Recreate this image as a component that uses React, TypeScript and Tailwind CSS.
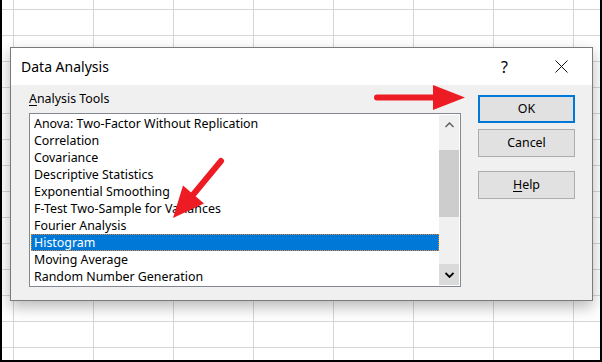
import React from "react";

const items = [
  "Anova: Two-Factor Without Replication",
  "Correlation",
  "Covariance",
  "Descriptive Statistics",
  "Exponential Smoothing",
  "F-Test Two-Sample for Variances",
  "Fourier Analysis",
  "Histogram",
  "Moving Average",
  "Random Number Generation",
];

export default function App() {
  return (
    <div
      className="relative w-[602px] h-[362px] overflow-hidden bg-black pl-[2px] pr-[2px] pb-[2px]"
      style={{ fontFamily: '"Noto Sans", "Open Sans", sans-serif' }}
    >
      <div className="w-full h-full bg-white bg-[image:linear-gradient(to_right,#d6d6d6_1px,transparent_1px),linear-gradient(to_bottom,#d6d6d6_1px,transparent_1px)] bg-[size:80px_26px] bg-[position:11px_9px]" />

      {/* Dialog */}
      <div className="absolute left-[10px] top-[47px] w-[583px] h-[254px] border border-[#7a7a7a] bg-[#f0f0f0] flex flex-col shadow-[0_6px_14px_rgba(0,0,0,0.28)]">
        <div className="h-[37px] bg-white flex items-center justify-between pl-[10px] pr-[2px] shrink-0">
          <span className="text-[14px] text-black leading-none">Data Analysis</span>
          <div className="flex items-center">
            <div className="w-[57px] flex justify-center text-[16px] text-black leading-none">?</div>
            <div className="w-[57px] flex justify-center">
              <svg width="13" height="13" viewBox="0 0 13 13">
                <path d="M0.5 0.5 L12.5 12.5 M12.5 0.5 L0.5 12.5" stroke="#111" strokeWidth="1" />
              </svg>
            </div>
          </div>
        </div>

        <div className="flex flex-1 pl-[18px] pr-[17px]">
          <div className="flex flex-col pt-[5px] w-[432px]">
            <div className="h-[18px] leading-[18px] text-[12.4px] text-black">
              <span className="underline underline-offset-2">A</span>nalysis Tools
            </div>
            <div className="mt-[5px] h-[174px] border border-[#828790] bg-white p-[1px] flex">
              <div className="flex-1 flex flex-col">
                {items.map((it) => {
                  const sel = it === "Histogram";
                  return (
                    <div
                      key={it}
                      className={
                        sel
                          ? "h-[17px] leading-[16px] pl-[2px] text-[12.4px] text-white bg-[#0078d7] border border-dotted border-[#e8842a] whitespace-nowrap"
                          : "h-[17px] leading-[18px] pl-[3px] text-[12.4px] text-black whitespace-nowrap"
                      }
                    >
                      {it}
                    </div>
                  );
                })}
              </div>
              <div className="w-[20px] flex flex-col bg-[#f0f0f0]">
                <div className="h-[20px] flex items-center justify-center">
                  <svg width="9" height="6" viewBox="0 0 9 6">
                    <path d="M0.5 5 L4.5 1 L8.5 5" stroke="#606060" strokeWidth="1.5" fill="none" />
                  </svg>
                </div>
                <div className="h-[15px]" />
                <div className="h-[67px] bg-[#cdcdcd]" />
                <div className="flex-1" />
                <div className="h-[21px] bg-[#dadada] flex items-center justify-center">
                  <svg width="9" height="6" viewBox="0 0 9 6">
                    <path d="M0.5 1 L4.5 5 L8.5 1" stroke="#000" strokeWidth="1.8" fill="none" />
                  </svg>
                </div>
              </div>
            </div>
          </div>

          <div className="ml-auto flex flex-col pt-[10px] w-[97px]">
            <div className="h-[28px] border-2 border-[#0078d7] bg-[#e1e1e1] flex items-center justify-center text-[12.4px] text-black">
              OK
            </div>
            <div className="mt-[6px] h-[28px] border border-[#adadad] bg-[#e1e1e1] flex items-center justify-center text-[12.4px] text-black">
              Cancel
            </div>
            <div className="mt-[14px] h-[28px] border border-[#adadad] bg-[#e1e1e1] flex items-center justify-center text-[12.4px] text-black">
              <span>
                <span className="underline underline-offset-2">H</span>elp
              </span>
            </div>
          </div>
        </div>
      </div>

      {/* Red arrows */}
      <svg className="absolute left-0 top-0 pointer-events-none" width="602" height="362">
        <line x1="377" y1="97.5" x2="436" y2="97.5" stroke="#ed1c24" strokeWidth="6" strokeLinecap="round" />
        <polygon points="433,85 465,97.5 433,110" fill="#ed1c24" />
        <line x1="221" y1="161" x2="192" y2="196" stroke="#ed1c24" strokeWidth="6" strokeLinecap="round" />
        <polygon points="173,218 183,185.5 204,203.5" fill="#ed1c24" />
      </svg>
    </div>
  );
}
